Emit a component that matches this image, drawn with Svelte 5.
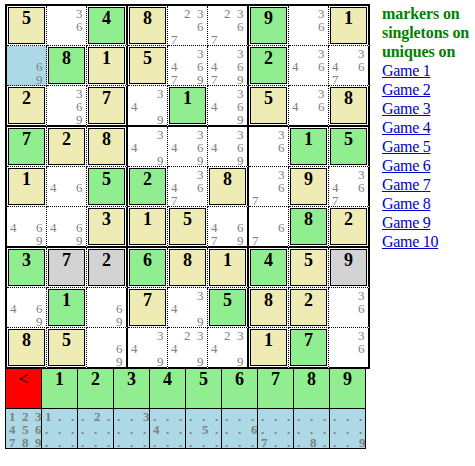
<script>
  // Given and solved digits; 0 is an open cell
  const digits = [
    '504800901', '081500200', '207010508',
    '728000015', '105208090', '003150082',
    '372681459', '010705820', '850000170'
  ];
  // y: given, g: selectable, s: solved, b: current, .: open
  const kinds = [
    'y.gy..g.y', 'bgyy..g..', 'y.y.g.y.y',
    'gyy....gg', 'y.gg.y.y.', '..yyy..gy',
    'gssgyygys', '.g.y.gyy.', 'yy....yg.'
  ];
  const notes = {
    '0-1': '36', '0-4': '2367', '0-5': '2367', '0-7': '36',
    '1-0': '69', '1-4': '34679', '1-5': '34679', '1-7': '346', '1-8': '3467',
    '2-1': '369', '2-3': '349', '2-5': '3469', '2-7': '346',
    '3-3': '349', '3-4': '3469', '3-5': '3469', '3-6': '36',
    '4-1': '46', '4-4': '3467', '4-6': '367', '4-8': '3467',
    '5-0': '469', '5-1': '469', '5-5': '4679', '5-6': '67',
    '7-0': '469', '7-2': '69', '7-4': '349', '7-8': '36',
    '8-2': '69', '8-3': '349', '8-4': '2349', '8-5': '2349', '8-8': '36'
  };
  const nine = [1, 2, 3, 4, 5, 6, 7, 8, 9];
  const keys = ['<', ...nine];
  const games = Array.from({ length: 10 }, (_, i) => i + 1);
</script>

<div class="page">
  <main>
    <div class="board">
      {#each digits as row, r}
        <div class="row" class:last={r % 3 === 2}>
          {#each row.split('') as d, c}
            <div class="cell" class:edge={c % 3 === 2} class:current={kinds[r][c] === 'b'}>
              {#if d !== '0'}
                <div class="box {kinds[r][c]}">{d}</div>
              {:else}
                <div class="notes">
                  {#each nine as n}<span>{(notes[`${r}-${c}`] ?? '').includes(String(n)) ? n : ''}</span>{/each}
                </div>
              {/if}
            </div>
          {/each}
        </div>
      {/each}
    </div>
    <div class="pad">
      {#each keys as k, i}
        <div class="key" class:back={i === 0}>{k}</div>
      {/each}
    </div>
    <div class="pad marks">
      {#each keys as k, i}
        <div class="notes mark">
          {#each nine as n}<span>{i === 0 || k === n ? n : '.'}</span>{/each}
        </div>
      {/each}
    </div>
  </main>
  <nav>
    <b>markers on</b>
    <b>singletons on</b>
    <b>uniques on</b>
    {#each games as g}
      <a href="#game{g}">Game {g}</a>
    {/each}
  </nav>
</div>

<style>
  .page {
    display: flex;
    align-items: flex-start;
    gap: 12px;
    padding: 4px 0 0 5px;
    font-family: "Liberation Serif", "Times New Roman", serif;
    background: #fff;
    color: #000;
  }
  main { width: 365px; flex: none; }
  .board {
    width: 363px;
    border: solid #000;
    border-width: 2px 0 0 2px;
  }
  .row { display: flex; height: 40px; }
  .row.last { height: 41px; }
  .cell {
    box-sizing: border-box;
    flex: none;
    width: 40px;
    border-right: 1px dotted #000;
    border-bottom: 1px dotted #000;
  }
  .cell.edge { width: 41px; border-right: 2px solid #000; }
  .last .cell { border-bottom: 2px solid #000; }
  .current { background: #add8e6; }
  .box {
    box-sizing: border-box;
    width: 37px;
    height: 37px;
    margin: 1px;
    border: 1px solid #000;
    font-weight: bold;
    font-size: 18px;
    line-height: 21px;
    text-align: center;
  }
  .y { background: #eeecb4; }
  .g { background: #90ee90; }
  .s { background: #d3d3d3; }
  .notes {
    display: grid;
    grid-template-columns: repeat(3, 13px);
    grid-template-rows: repeat(3, 13px);
    padding: 1px 0 0 3px;
    font-size: 13px;
    line-height: 13px;
    color: #808080;
  }
  .pad {
    display: flex;
    width: 360px;
    border-left: 1px solid #000;
  }
  .key {
    box-sizing: border-box;
    width: 36px;
    height: 40px;
    border: solid #000;
    border-width: 0 1px 1px 0;
    background: #90ee90;
    font-weight: bold;
    font-size: 18px;
    line-height: 20px;
    text-align: center;
  }
  .key.back { background: #f00; font-weight: normal; }
  .mark {
    box-sizing: border-box;
    width: 36px;
    height: 40px;
    border: solid #000;
    border-width: 0 1px 1px 0;
    background: #add8e6;
    font-weight: bold;
  }
  nav {
    display: flex;
    flex-direction: column;
    align-items: flex-start;
    font-size: 16px;
    line-height: 19px;
    white-space: nowrap;
  }
  b { color: #008000; letter-spacing: -0.1px; }
  a { color: #0000cc; letter-spacing: -0.3px; }
</style>
